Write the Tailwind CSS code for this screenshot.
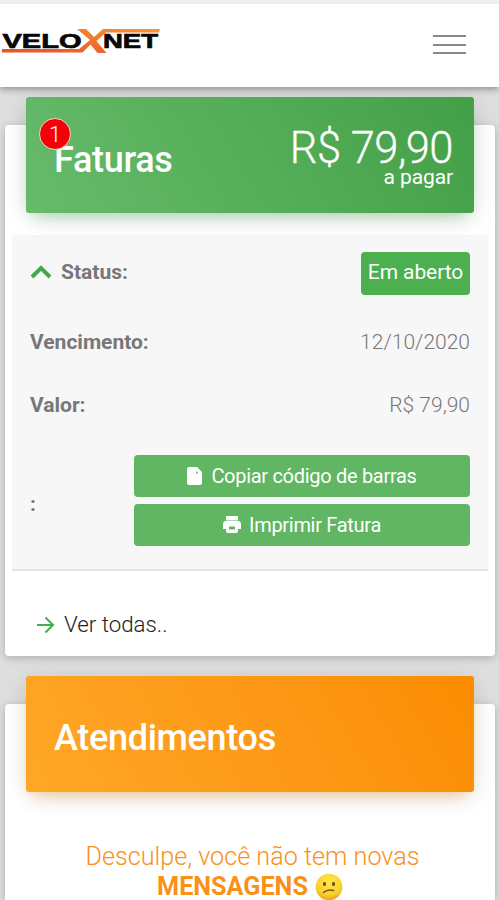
<!DOCTYPE html>
<html lang="pt-BR">
<head>
<meta charset="utf-8">
<meta name="viewport" content="width=device-width">
<title>VeloXnet</title>
<script src="https://cdn.jsdelivr.net/npm/@tailwindcss/browser@4"></script>
</head>
<body class="h-[900px] overflow-hidden bg-[#dedede] font-['Roboto','Liberation_Sans',sans-serif] font-light">
<header class="relative z-10 flex h-[87px] items-start justify-between border-t-4 border-[#efefef] bg-white shadow-[0_2px_7px_rgba(0,0,0,0.38)]">
  <svg class="mt-[22px]" width="164" height="32" viewBox="0 0 164 32" role="img" aria-label="VELOXNET">
    <defs><linearGradient id="flame" x1="0" y1="1" x2="1" y2="0"><stop offset="0" stop-color="#e7502b"/><stop offset="1" stop-color="#f79433"/></linearGradient></defs>
    <g fill="#080808" stroke="#080808" stroke-width=".7" font-family="Liberation Sans, sans-serif" font-weight="700" font-size="20">
      <text x="2.5" y="22" textLength="79" lengthAdjust="spacingAndGlyphs">VELO</text>
      <text x="103" y="22" textLength="55" lengthAdjust="spacingAndGlyphs">NET</text>
    </g>
    <path d="M77 3h9l8 8 9-8h57l-1 3.500h-53l-9.500 8.500 10 12h-9l-7-8.500-8 8H2v-3.500h77l11-9z" fill="url(#flame)"/>
  </svg>
  <button class="mt-[31px] mr-[33px] flex w-[33px] flex-col gap-[6.5px]" aria-label="Menu">
    <span class="h-[2px] w-full bg-[#888]"></span><span class="h-[2px] w-full bg-[#888]"></span><span class="h-[2px] w-full bg-[#888]"></span>
  </button>
</header>
<main class="flex flex-col gap-12 pt-[38px] pr-[4px] pl-[5px]">
  <section class="h-[531px] rounded-[4px] bg-white px-[7px] shadow-[0_2px_8px_rgba(0,0,0,0.22)]">
    <div class="relative -top-7 mx-[14px] flex h-[116px] justify-between rounded-[3px] bg-linear-60 from-[#66bb6a] to-[#43a047] pr-[21px] pl-[28px] text-white shadow-[0_5px_27px_-4px_rgba(0,0,0,0.14),0_8px_16px_-6px_rgba(76,175,80,0.4)]">
      <h2 class="pt-[43px] text-[36px] leading-[40px] font-medium tracking-[-0.3px]">Faturas</h2>
      <span class="absolute top-[21px] left-[13px] flex size-[32px] items-center justify-center rounded-full border border-[#f3d7c5] bg-[#f60008] text-[22px] font-light">1</span>
      <div class="pt-[28px] text-right">
        <p class="text-[43.5px] leading-[48px] font-light tracking-[-0.5px] [-webkit-text-stroke:0.3px_white]">R$ 79,90</p>
        <p class="-mt-[8px] text-[21px] leading-[24px] font-normal tracking-[-0.1px]">a pagar</p>
      </div>
    </div>
    <div class="-mt-[6px] flex h-[336px] flex-col border-b-2 border-[#e5e5e5] bg-[#f7f7f7] pr-[18px] pl-[18px] text-[21px] text-[#777]">
      <div class="flex h-[76px] items-center justify-between">
        <div class="flex items-center gap-[9px] pb-px">
          <svg class="mb-[3px]" width="22" height="16" viewBox="0 0 22 16" fill="none" stroke="#43a94a" stroke-width="4"><path d="M2 14l9-9 9 9"/></svg>
          <b class="font-bold">Status:</b>
        </div>
        <span class="flex h-[43px] w-[109px] items-center justify-center rounded-[4px] bg-[#4caf50] font-normal tracking-[-0.1px] text-white">Em aberto</span>
      </div>
      <div class="flex h-[64px] items-center justify-between"><b class="font-bold">Vencimento:</b><span>12/10/2020</span></div>
      <div class="flex h-[62px] items-center justify-between"><b class="font-bold">Valor:</b><span>R$ 79,90</span></div>
      <div class="flex h-[132px] items-center justify-between"><b class="pt-[3px] font-bold">:</b>
        <div class="flex w-[336px] flex-col gap-[7px] pb-[6px] text-[20px] font-normal tracking-[-0.3px] text-white">
          <button class="flex h-[42px] items-center justify-center gap-[9px] rounded-[4px] bg-[#60b662]">
            <svg width="15" height="18" viewBox="0 0 15 18"><path d="M2 0h8l5 5v11q0 2-2 2H2q-2 0-2-2V2q0-2 2-2z" fill="#fff"/><path d="M9 4l2.500 2.500H9z" fill="#60b662"/></svg>
            Copiar código de barras
          </button>
          <button class="flex h-[42px] items-center justify-center gap-[8px] rounded-[4px] bg-[#60b662]">
            <svg width="18" height="17" viewBox="0 0 18 17"><path d="M3 0h12v5q3 0 3 3v5h-3v2q0 2-2 2H5q-2 0-2-2v-2H0V8q0-3 3-3z" fill="#fff"/><path d="M3 4.500h12" stroke="#8acb8c" stroke-width=".7"/><path d="M6 10.500h6v3H6z" fill="#60b662"/></svg>
            Imprimir Fatura
          </button>
        </div>
      </div>
    </div>
    <a class="mt-[42px] ml-[25px] flex h-6 items-center gap-[9px] text-[22.3px] text-[#222]">
      <svg width="18" height="18" viewBox="0 0 18 18" fill="none" stroke="#43ad50" stroke-width="2"><path d="M0 9h16M8.5 1.5L16 9l-7.500 7.500"/></svg>
      Ver todas..
    </a>
  </section>
  <section class="h-[196px] rounded-t-[4px] bg-white px-[7px] shadow-[0_2px_8px_rgba(0,0,0,0.22)]">
    <div class="relative -top-7 mx-[14px] h-[116px] rounded-[3px] bg-linear-60 from-[#ffa726] to-[#fb8c00] pl-[28px] text-white shadow-[0_5px_27px_-4px_rgba(0,0,0,0.14),0_8px_16px_-6px_rgba(255,152,0,0.4)]">
      <h2 class="pt-[42px] text-[36px] leading-[40px] font-medium tracking-[-0.3px]">Atendimentos</h2>
    </div>
    <div class="mt-[22px] h-[58px] pl-[5px] text-center text-[25.2px] leading-[29px] text-[#f99118]">
      <p>Desculpe, você não tem novas</p>
      <p class="-ml-[5px] flex h-[29px] items-center justify-center gap-[7px] pt-[2px] font-bold"><span>MENSAGENS</span>
        <svg width="28" height="28" viewBox="0 0 28 28"><defs><radialGradient id="face" cx=".5" cy=".3" r=".75"><stop offset="0" stop-color="#ffe94a"/><stop offset=".65" stop-color="#fbd02c"/><stop offset="1" stop-color="#e49b18"/></radialGradient></defs><circle cx="14" cy="14" r="13.300" fill="url(#face)"/><ellipse cx="9.500" cy="11" rx="1.600" ry="2" fill="#6b4914"/><ellipse cx="18.500" cy="11" rx="1.600" ry="2" fill="#6b4914"/><path d="M8.500 19.500q4-3.500 10-2" fill="none" stroke="#74501a" stroke-width="1.500" stroke-linecap="round"/></svg>
      </p>
    </div>
  </section>
</main>
</body>
</html>
